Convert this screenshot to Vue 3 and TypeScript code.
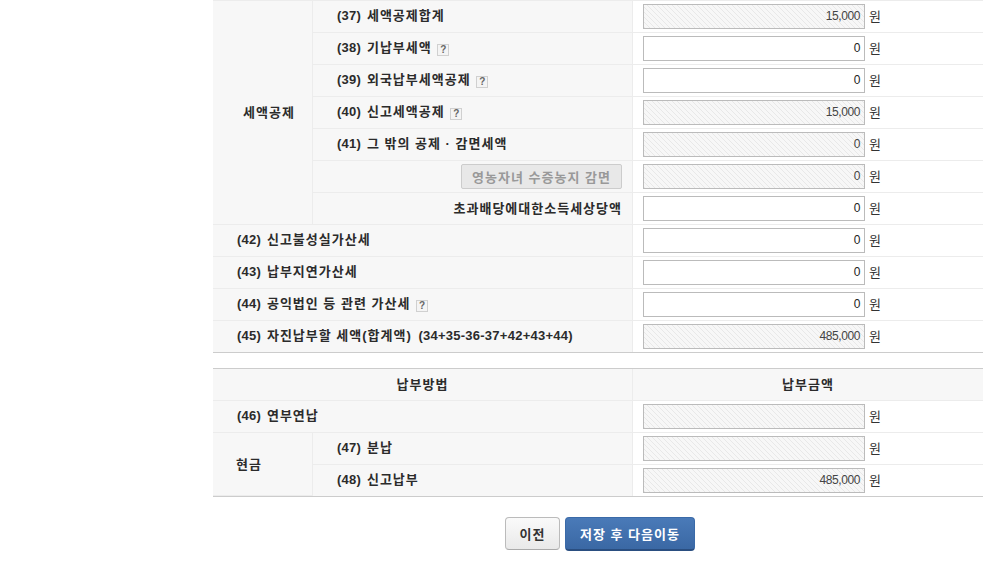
<script setup lang="ts">
type Row = {
	no: string
	label: string
	formula?: string
	help?: boolean
	value?: string
	readonly?: boolean
}

const creditRows: Row[] = [
	{ no: '(37)', label: '세액공제합계', value: '15,000', readonly: true },
	{ no: '(38)', label: '기납부세액', help: true, value: '0' },
	{ no: '(39)', label: '외국납부세액공제', help: true, value: '0' },
	{ no: '(40)', label: '신고세액공제', help: true, value: '15,000', readonly: true },
	{ no: '(41)', label: '그 밖의 공제 · 감면세액', value: '0', readonly: true },
]

const plainRows: Row[] = [
	{ no: '(42)', label: '신고불성실가산세', value: '0' },
	{ no: '(43)', label: '납부지연가산세', value: '0' },
	{ no: '(44)', label: '공익법인 등 관련 가산세', help: true, value: '0' },
	{ no: '(45)', label: '자진납부할 세액(합계액)', formula: '(34+35-36-37+42+43+44)', value: '485,000', readonly: true },
]
</script>

<template>
	<div class="page">
		<table class="tax-table first">
			<colgroup>
				<col class="col-group" />
				<col class="col-label" />
				<col />
			</colgroup>
			<tbody>
				<tr v-for="(row, i) in creditRows" :key="row.no">
					<th v-if="i === 0" rowspan="7" class="group">세액공제</th>
					<th class="sub">
						<span class="no">{{ row.no }}</span>{{ row.label }}
						<span v-if="row.help" class="help">?</span>
					</th>
					<td>
						<span class="amount" :class="{ readonly: row.readonly }">{{ row.value }}</span>
						<span class="unit">원</span>
					</td>
				</tr>
				<tr>
					<th class="right"><button type="button" class="reduce-btn" disabled>영농자녀 수증농지 감면</button></th>
					<td>
						<span class="amount readonly">0</span>
						<span class="unit">원</span>
					</td>
				</tr>
				<tr>
					<th class="right">초과배당에대한소득세상당액</th>
					<td>
						<span class="amount">0</span>
						<span class="unit">원</span>
					</td>
				</tr>
				<tr v-for="row in plainRows" :key="row.no">
					<th colspan="2" class="wide">
						<span class="no">{{ row.no }}</span>{{ row.label }}
						<span v-if="row.formula" class="formula">{{ row.formula }}</span>
						<span v-if="row.help" class="help">?</span>
					</th>
					<td>
						<span class="amount" :class="{ readonly: row.readonly }">{{ row.value }}</span>
						<span class="unit">원</span>
					</td>
				</tr>
			</tbody>
		</table>

		<table class="tax-table second">
			<colgroup>
				<col class="col-group" />
				<col class="col-label" />
				<col />
			</colgroup>
			<tbody>
				<tr>
					<th colspan="2" class="head">납부방법</th>
					<th class="head">납부금액</th>
				</tr>
				<tr>
					<th colspan="2" class="wide"><span class="no">(46)</span>연부연납</th>
					<td>
						<span class="amount readonly"></span>
						<span class="unit">원</span>
					</td>
				</tr>
				<tr>
					<th rowspan="2" class="group cash">현금</th>
					<th class="sub"><span class="no">(47)</span>분납</th>
					<td>
						<span class="amount readonly"></span>
						<span class="unit">원</span>
					</td>
				</tr>
				<tr>
					<th class="sub"><span class="no">(48)</span>신고납부</th>
					<td>
						<span class="amount readonly">485,000</span>
						<span class="unit">원</span>
					</td>
				</tr>
			</tbody>
		</table>

		<div class="actions">
			<button type="button" class="btn prev">이전</button>
			<button type="button" class="btn next">저장 후 다음이동</button>
		</div>
	</div>
</template>

<style>
html,
body {
	margin: 0;
	background: #fff;
	overflow: hidden;
}
</style>

<style scoped>
.page {
	width: 770px;
	margin-left: 213px;
	font-family: "Liberation Sans", "Noto Sans CJK KR", sans-serif;
	color: #2b2b2b;
}

.tax-table {
	width: 770px;
	table-layout: fixed;
	border-collapse: separate;
	border-spacing: 0;
	border-bottom: 1px solid #ccc;
}

.tax-table.first {
	border-top: 1px solid #ececec;
}

.tax-table.second {
	margin-top: 15px;
	border-top: 1px solid #ccc;
}

.col-group {
	width: 100px;
}

.col-label {
	width: 320px;
}

th,
td {
	height: 31px;
	padding: 0;
	box-sizing: content-box;
	border-bottom: 1px solid #ececec;
	font-size: 13px;
	line-height: 16px;
	letter-spacing: 1px;
}

tr:last-child > th,
tr:last-child > td {
	border-bottom: 0;
}

th {
	background: #f7f7f7;
	font-weight: 700;
	text-align: left;
	border-right: 1px solid #ececec;
}

th.group {
	text-align: center;
	padding-left: 14px;
	padding-right: 1px;
}

th.group.cash {
	text-align: left;
	padding-left: 23px;
	padding-top: 2px;
}

th.sub,
th.wide {
	height: 29px;
	padding-left: 24px;
	padding-bottom: 2px;
}

th.right {
	text-align: right;
	padding-right: 10px;
}

th.head {
	text-align: center;
}

th.head:last-child {
	border-right: 0;
}

td {
	padding-left: 10px;
	background: #fff;
	font-size: 12px;
	letter-spacing: 0;
	white-space: nowrap;
}

.no {
	margin-right: 6px;
	letter-spacing: 0.2px;
}

.formula {
	margin-left: 2px;
	letter-spacing: 0.25px;
}

.amount {
	display: inline-block;
	width: 222px;
	height: 25px;
	box-sizing: border-box;
	padding-right: 4px;
	border: 1px solid #bbb;
	background: #fff;
	color: #222;
	font-size: 12px;
	line-height: 23px;
	letter-spacing: -0.4px;
	text-align: right;
	vertical-align: middle;
}

.amount.readonly {
	color: #444;
	background: repeating-linear-gradient(45deg, #e8e8e8 0, #e8e8e8 1px, #f7f7f7 1px, #f7f7f7 3.54px);
}

.unit {
	display: inline-block;
	margin-left: 4px;
	padding-bottom: 2px;
	color: #333;
	font-family: "Noto Sans CJK KR", sans-serif;
	font-size: 13px;
	vertical-align: middle;
}

.help {
	display: inline-block;
	width: 10px;
	height: 10px;
	margin-left: 1px;
	border: 1px solid #d0d0d0;
	background: #f4f4f4;
	color: #666;
	font-size: 10px;
	font-weight: 700;
	line-height: 10px;
	letter-spacing: 0;
	text-align: center;
	vertical-align: -1px;
}

.reduce-btn {
	width: 161px;
	height: 25px;
	padding: 0;
	border: 1px solid #ccc;
	border-radius: 2px;
	background: #e8e8e8;
	color: #999;
	font-family: inherit;
	font-size: 13px;
	font-weight: 700;
	letter-spacing: 1px;
	vertical-align: middle;
}

.actions {
	display: flex;
	justify-content: center;
	gap: 5px;
	margin-top: 20px;
	padding-left: 4px;
}

.btn {
	height: 33px;
	padding: 0;
	border-radius: 4px;
	font-family: inherit;
	font-size: 13px;
	font-weight: 700;
	letter-spacing: 1px;
}

.prev {
	width: 55px;
	border: 1px solid #bbb;
	border-bottom-color: #aaa;
	background: linear-gradient(#fafafa, #e9e9e9);
	color: #333;
}

.next {
	width: 130px;
	height: 34px;
	border: 1px solid #3a6aa8;
	border-bottom: 2px solid #2a4e80;
	background: linear-gradient(#4a7ab8, #3a68a4);
	color: #fff;
}
</style>
